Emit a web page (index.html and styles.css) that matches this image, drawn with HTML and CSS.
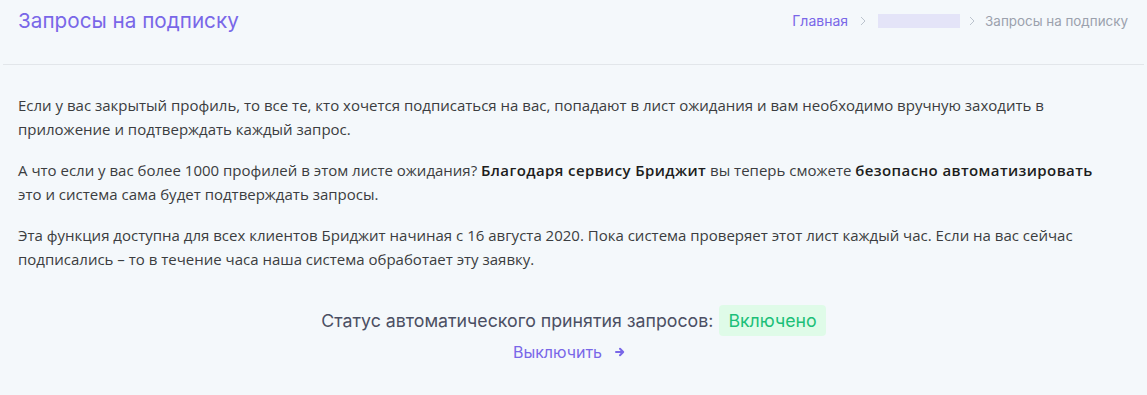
FILE: index.html
```html
<!DOCTYPE html>
<html lang="ru">
<head>
  <meta charset="UTF-8">
  <title>Запросы на подписку</title>
  <link rel="stylesheet" href="styles.css">
</head>
<body>
  <div class="page">
    <div class="page-head">
      <h1 class="page-title">Запросы на подписку</h1>
      <div class="crumbs">
        <a href="#" class="crumb-link">Главная</a>
        <svg class="crumb-sep" width="6" height="10" viewBox="0 0 6 10"><path d="M1 1l4 4-4 4" fill="none" stroke="currentColor" stroke-width="1"/></svg>
        <span class="crumb-blank"></span>
        <svg class="crumb-sep" width="6" height="10" viewBox="0 0 6 10"><path d="M1 1l4 4-4 4" fill="none" stroke="currentColor" stroke-width="1"/></svg>
        <span class="crumb-current">Запросы на подписку</span>
      </div>
    </div>

    <div class="page-body">
      <p>Если у вас закрытый профиль, то все те, кто хочется подписаться на вас, попадают в лист ожидания и вам необходимо вручную заходить в приложение и подтверждать каждый запрос.</p>
      <p>А что если у вас более 1000 профилей в этом листе ожидания? <b>Благодаря сервису Бриджит</b> вы теперь сможете <b>безопасно автоматизировать</b> это и система сама будет подтверждать запросы.</p>
      <p>Эта функция доступна для всех клиентов Бриджит начиная с 16 августа 2020. Пока система проверяет этот лист каждый час. Если на вас сейчас подписались – то в течение часа наша система обработает эту заявку.</p>

      <div class="status">
        <div class="status-line">
          Статус автоматического принятия запросов:
          <span class="badge-on">Включено</span>
        </div>
        <a href="#" class="toggle-link">Выключить
          <svg class="toggle-arrow" width="10" height="10" viewBox="0 0 10 10"><path d="M1 5h6.5M5 1.8L8.2 5 5 8.2" fill="none" stroke="currentColor" stroke-width="2" stroke-linecap="round" stroke-linejoin="round"/></svg>
        </a>
      </div>
    </div>
  </div>
</body>
</html>
```

FILE: styles.css
```css
body {
  margin: 0;
  background: #f4f8fb;
  font-family: "Open Sans", Arial, sans-serif;
}
.page {
  margin: 0 3px;
}
.page-head {
  display: flex;
  justify-content: space-between;
  align-items: flex-start;
  padding: 8px 16px 0 15px;
  height: 56px;
  border-bottom: 1px solid #e2e6ea;
}
.page-title {
  margin: 0;
  font-family: Inter, sans-serif;
  font-weight: 400;
  font-size: 20.7px;
  line-height: 25px;
  color: #7967e8;
}
.crumbs {
  display: flex;
  align-items: center;
  gap: 12px;
  padding-top: 4px;
  font-family: Inter, sans-serif;
  font-size: 14px;
  color: #9ba1ad;
}
.crumb-link {
  color: #7967e8;
  text-decoration: none;
}
.crumb-sep {
  color: #bcc4ce;
}
.crumb-blank {
  width: 82px;
  height: 14px;
  margin-right: -3px;
  background: #e4e4f8;
}
.crumb-current {
  font-size: 13.4px;
  margin-left: -2px;
}
.page-body {
  padding: 28px 40px 0 15px;
}
.page-body p {
  margin: 0 0 17px;
  font-size: 15px;
  line-height: 24px;
  color: #3b3d40;
}
.page-body b {
  font-weight: 600;
  letter-spacing: 0.4px;
  color: #1c1d20;
}
.status {
  display: flex;
  flex-direction: column;
  align-items: center;
  margin: 34px -25px 0 0;
}
.status-line {
  display: flex;
  align-items: center;
  gap: 6px;
  font-family: Inter, sans-serif;
  font-size: 17.75px;
  color: #4b4f63;
}
.badge-on {
  padding: 5px 9px;
  border-radius: 4px;
  background: #dffbe8;
  color: #1cbf78;
}
.toggle-link {
  display: flex;
  align-items: center;
  gap: 13px;
  margin-top: 6px;
  font-family: Inter, sans-serif;
  font-size: 16px;
  color: #7967e8;
  text-decoration: none;
}
.toggle-arrow {
  margin-right: 9px;
}
```
